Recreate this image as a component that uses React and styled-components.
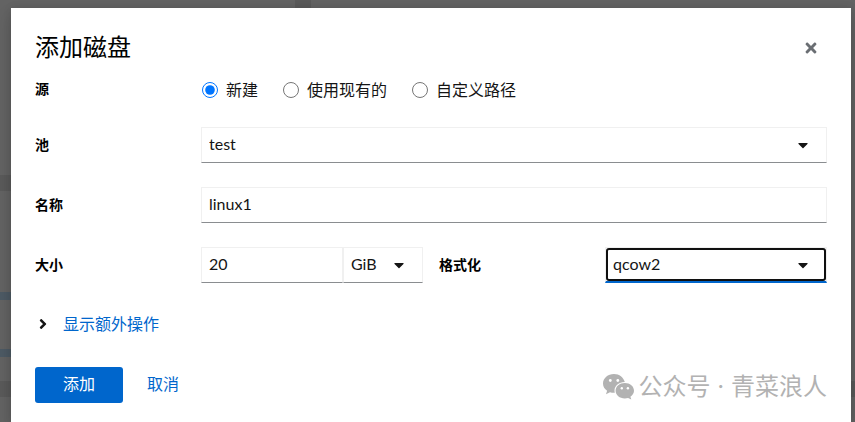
import React, { useState } from "react";
import styled, { createGlobalStyle } from "styled-components";
import { FaAngleRight, FaCaretDown, FaTimes } from "react-icons/fa";

const sources = [
  { value: "new", text: "新建" },
  { value: "existing", text: "使用现有的" },
  { value: "custom", text: "自定义路径" },
];

function Select({ id, label, value, options, focused, onChange }) {
  return (
    <SelectBox $focused={focused}>
      <select id={id} value={value} onChange={(e) => onChange(e.target.value)} aria-label={label}>
        {options.map((option) => (
          <option key={option}>{option}</option>
        ))}
      </select>
      <FaCaretDown aria-hidden="true" />
    </SelectBox>
  );
}

function App() {
  const [source, setSource] = useState("new");
  const [pool, setPool] = useState("test");
  const [name, setName] = useState("linux1");
  const [size, setSize] = useState("20");
  const [unit, setUnit] = useState("GiB");
  const [format, setFormat] = useState("qcow2");

  return (
    <Backdrop>
      <GlobalStyle />
      <Modal role="dialog" aria-labelledby="dialog-title">
        <Header>
          <Title id="dialog-title">添加磁盘</Title>
          <CloseButton type="button" aria-label="关闭">
            <FaTimes />
          </CloseButton>
        </Header>

        <Form onSubmit={(e) => e.preventDefault()}>
          <Row $top role="radiogroup" aria-labelledby="source-label">
            <Caption id="source-label">源</Caption>
            <Radios>
              {sources.map((item) => (
                <Radio key={item.value}>
                  <input
                    type="radio"
                    name="source"
                    checked={source === item.value}
                    onChange={() => setSource(item.value)}
                  />
                  {item.text}
                </Radio>
              ))}
            </Radios>
          </Row>
          <Row>
            <Label htmlFor="pool">池</Label>
            <Select id="pool" value={pool} options={["test", "default"]} onChange={setPool} />
          </Row>
          <Row>
            <Label htmlFor="name">名称</Label>
            <Input id="name" value={name} onChange={(e) => setName(e.target.value)} />
          </Row>
          <Row $split>
            <Label htmlFor="size">大小</Label>
            <SizeGroup>
              <Input id="size" value={size} onChange={(e) => setSize(e.target.value)} />
              <Select id="unit" label="单位" value={unit} options={["MiB", "GiB"]} onChange={setUnit} />
            </SizeGroup>
            <Label htmlFor="format">格式化</Label>
            <Select id="format" value={format} options={["qcow2", "raw"]} focused onChange={setFormat} />
          </Row>
          <ExpandButton type="button" aria-expanded="false">
            <FaAngleRight />
            显示额外操作
          </ExpandButton>
          <Footer>
            <Button type="submit" $primary>
              添加
            </Button>
            <Button type="button">取消</Button>
            <Account>
              <WeChatLogo />
              公众号 · 青菜浪人
            </Account>
          </Footer>
        </Form>
      </Modal>
    </Backdrop>
  );
}

function WeChatLogo() {
  return (
    <svg width="32" height="26" viewBox="0 0 32 26" aria-hidden="true">
      <path
        fill="#b2b2b2"
        d="M11 0C4.900 0 0 4.200 0 9.500c0 3 1.600 5.600 4.100 7.300L3 20.300l4-2.100c1.300.4 2.600.6 4 .6h.8a8 8 0 0 1-.3-2.200c0-4.800 4.500-8.500 10-8.500h.3C20.700 3.500 16.300 0 11 0z"
      />
      <path
        fill="#b2b2b2"
        d="M21.800 9C16.600 9 12.600 12.400 12.600 16.700s4 7.700 9.200 7.700c1.200 0 2.300-.2 3.300-.5l3.200 1.700-.9-2.900c2.200-1.400 3.600-3.600 3.600-6C31 12.400 27 9 21.800 9z"
      />
      <g fill="#fff">
        <circle cx="7.300" cy="6.500" r="1.400" />
        <circle cx="14.800" cy="6.500" r="1.400" />
        <circle cx="18.800" cy="14.300" r="1.200" />
        <circle cx="24.900" cy="14.300" r="1.200" />
      </g>
    </svg>
  );
}

const GlobalStyle = createGlobalStyle`
  * {
    box-sizing: border-box;
  }

  body {
    margin: 0;
    color: #151515;
    font: 16px/24px Lato, "Noto Sans CJK SC", sans-serif;
  }

  button, input, select {
    color: inherit;
    font: inherit;
  }
`;

const Backdrop = styled.div`
  display: flex;
  min-height: 100vh;
  padding: 8px 4px 0 11px;
  background:
    linear-gradient(#4d5a64, #4d5a64) 0 292px / 11px 8px no-repeat,
    linear-gradient(#4d5a64, #4d5a64) 0 349px / 11px 8px no-repeat,
    linear-gradient(#5a5a5a, #5a5a5a) 0 175px / 11px 16px no-repeat,
    linear-gradient(#5a5a5a, #5a5a5a) 0 381px / 100% 16px no-repeat,
    linear-gradient(#5a5a5a, #5a5a5a) 295px 0 / 16px 8px no-repeat,
    #636363;
`;

const Modal = styled.section`
  flex: 1;
  min-width: 0;
  padding: 24px 24px 16px;
  background: #fff;
  box-shadow: 0 8px 16px rgba(0, 0, 0, 0.16), 0 0 8px rgba(0, 0, 0, 0.1);
`;

const Header = styled.header`
  display: flex;
  align-items: flex-start;
  justify-content: space-between;
  margin-bottom: 15px;
`;

const Title = styled.h1`
  margin: 0;
  color: #000;
  font-size: 24px;
  font-weight: 400;
  line-height: 30px;
`;

const CloseButton = styled.button`
  display: flex;
  align-items: center;
  justify-content: center;
  width: 32px;
  height: 32px;
  padding: 0;
  border: 0;
  background: none;
  color: #6a6e73;
`;

const Form = styled.form`
  display: flex;
  flex-direction: column;
  gap: 24px;
`;

const Row = styled.div`
  display: grid;
  grid-template-columns: ${({ $split }) => ($split ? "150px 1fr 150px 1fr" : "150px 1fr")};
  column-gap: 16px;
  align-items: ${({ $top }) => ($top ? "start" : "center")};
  min-height: 24px;
`;

const Label = styled.label`
  color: #000;
  font-size: 14px;
  font-weight: 700;
  line-height: 20px;
`;

const Caption = styled(Label).attrs({ as: "span" })``;

const Radios = styled.div`
  display: flex;
  gap: 24px;
`;

const Radio = styled.label`
  display: flex;
  align-items: center;
  gap: 8px;
  line-height: 22px;

  input {
    width: 16px;
    height: 16px;
    margin: 0 0 0 1px;
  }
`;

const Input = styled.input`
  width: 100%;
  min-width: 0;
  height: 36px;
  padding: 0 7px 3px;
  border: 1px solid #f0f0f0;
  border-bottom-color: #8a8d90;
  border-radius: 0;
  background: #fff;
  outline: none;
`;

const SelectBox = styled.div`
  display: grid;
  align-items: center;
  height: 36px;
  border: 1px solid #f0f0f0;
  border-bottom: ${({ $focused }) => ($focused ? "2px solid #06c" : "1px solid #8a8d90")};

  select {
    grid-area: 1 / 1;
    width: 100%;
    height: 100%;
    padding: 0 40px 2px 7px;
    border: 0;
    border-radius: 3px;
    background: #fff;
    appearance: none;
    outline: none;
    box-shadow: ${({ $focused }) => ($focused ? "inset 0 0 0 2px #101010" : "none")};
  }

  svg {
    grid-area: 1 / 1;
    justify-self: end;
    margin-right: 15px;
    pointer-events: none;
  }
`;

const SizeGroup = styled.div`
  display: grid;
  grid-template-columns: 1fr 80px;
`;

const ExpandButton = styled.button`
  display: flex;
  align-items: center;
  align-self: flex-start;
  gap: 12px;
  height: 36px;
  padding: 0 0 2px;
  border: 0;
  background: none;
  color: #06c;

  svg {
    width: 16px;
    color: #151515;
  }
`;

const Footer = styled.footer`
  display: flex;
  align-items: center;
`;

const Button = styled.button`
  height: 36px;
  padding: 0 ${({ $primary }) => ($primary ? "28px" : "24px")} 2px;
  border: 0;
  border-radius: 3px;
  background: ${({ $primary }) => ($primary ? "#06c" : "none")};
  color: ${({ $primary }) => ($primary ? "#fff" : "#06c")};
`;

const Account = styled.div`
  display: flex;
  align-items: center;
  gap: 4px;
  margin-left: auto;
  padding-top: 4px;
  color: #b2b2b2;
  font-family: Inter, "Noto Sans CJK SC", sans-serif;
  font-size: 24px;
`;

export default App;
